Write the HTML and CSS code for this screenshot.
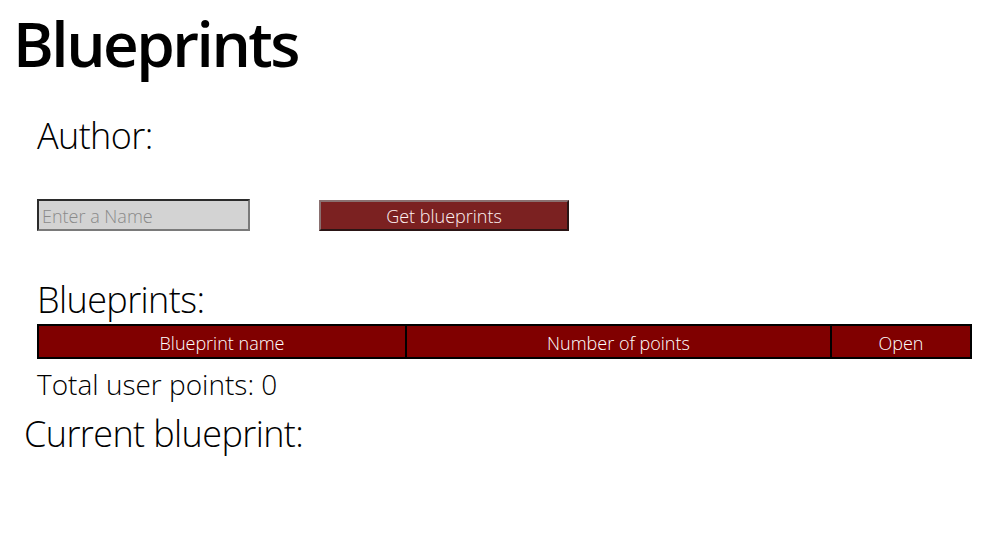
FILE: index.html
```html
<!DOCTYPE html>
<html lang="en">
<head>
<meta charset="utf-8">
<title>Blueprints</title>
<link rel="stylesheet" href="styles.css">
</head>
<body>
<h1 class="title">Blueprints</h1>
<div class="content">
  <h2 class="label author">Author:</h2>
  <div class="form-row">
    <input class="name-input" type="text" placeholder="Enter a Name">
    <button class="get-btn" type="button">Get blueprints</button>
  </div>
  <h2 class="label blueprints">Blueprints:</h2>
  <table class="bp-table">
    <thead>
      <tr>
        <th class="col-name">Blueprint name</th>
        <th class="col-points">Number of points</th>
        <th class="col-open">Open</th>
      </tr>
    </thead>
  </table>
  <p class="total">Total user points: 0</p>
</div>
<h2 class="label current">Current blueprint:</h2>
</body>
</html>
```
FILE: styles.css
```css
html, body {
  margin: 0;
  padding: 0;
  background: #ffffff;
}
body {
  font-family: "Open Sans", "Noto Sans", sans-serif;
  color: #000;
}
.title {
  margin: 5px 0 0 13px;
  font-size: 62px;
  line-height: 76px;
  font-weight: 600;
  letter-spacing: -2.5px;
}
.content {
  padding-left: 37px;
}
.label {
  margin: 0;
  font-size: 36px;
  line-height: 44px;
  font-weight: 300;
  letter-spacing: -0.6px;
}
.author {
  margin-top: 33px;
}
.form-row {
  display: flex;
  align-items: flex-start;
  gap: 69px;
  margin-top: 41px;
}
.name-input {
  box-sizing: border-box;
  width: 213px;
  height: 32px;
  margin: 0;
  padding: 2px 3px 0;
  border: 2px solid;
  border-color: #2b2b2b #7a7a7a #7a7a7a #2b2b2b;
  background: #d3d3d3;
  font-family: inherit;
  font-size: 18px;
  font-weight: 300;
  color: #333;
  outline: none;
}
.name-input::placeholder {
  color: #8a8a8a;
}
.get-btn {
  box-sizing: border-box;
  width: 250px;
  height: 31px;
  margin: 1px 0 0 0;
  padding: 0;
  border: 2px solid;
  border-color: #8a7070 #2a1515 #2a1515 #8a7070;
  background: #7b2121;
  color: #fff2f2;
  font-family: inherit;
  font-size: 18px;
  font-weight: 300;
  line-height: 28px;
}
.blueprints {
  margin-top: 47px;
}
.bp-table {
  margin-top: 2px;
  width: 935px;
  border-collapse: collapse;
  border: 2px solid #000;
  background: #800000;
}
.bp-table th {
  height: 29px;
  padding: 2px 0 0;
  border-left: 2px solid #000;
  color: #fff;
  font-size: 18px;
  font-weight: 300;
  text-align: center;
}
.col-name { width: 366px; }
.col-points { width: 423px; }
.bp-table th:first-child { border-left: none; }
.total {
  margin: 7px 0 0 0;
  font-size: 28px;
  line-height: 36px;
  font-weight: 300;
}
.current {
  margin: 10px 0 0 24px;
}
```
